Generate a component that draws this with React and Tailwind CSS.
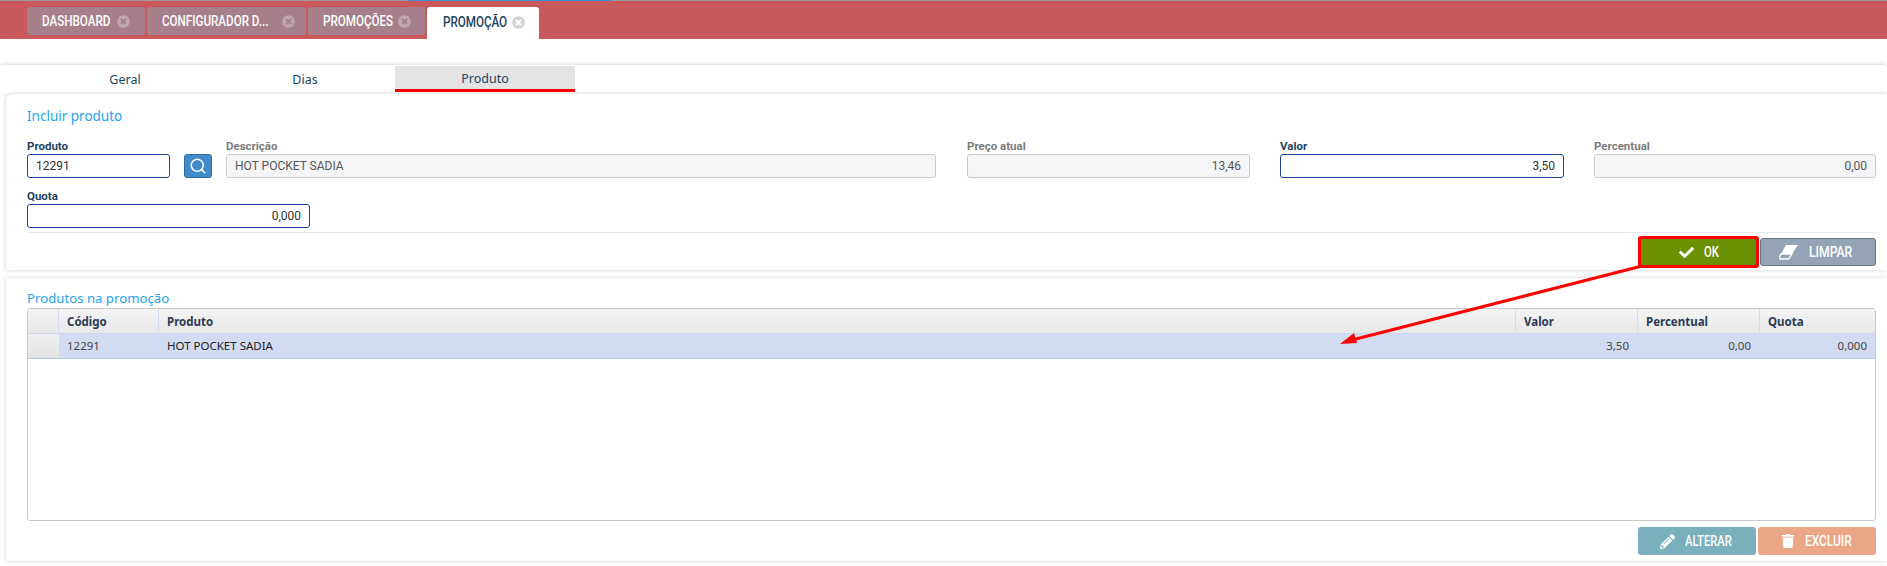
import { FaCheck, FaPencilAlt, FaTrash, FaTimesCircle } from "react-icons/fa";
import { Search } from "lucide-react";

const tabs = [
  { name: "DASHBOARD", width: "w-[118px]", text: "w-[75px]" },
  { name: "CONFIGURADOR D...", width: "w-[159px]", text: "w-[120px]" },
  { name: "PROMOÇÕES", width: "w-[117px]", text: "w-[75px]" },
];

function Field({ label, value, active, right, className }) {
  return (
    <div className={className}>
      <div className={`text-[11.5px] font-bold leading-[16px] ${active ? "text-[#1d4460]" : "text-[#7b7b7b]"}`}>
        {label}
      </div>
      <div
        className={`flex h-[24px] items-center rounded-[3px] border px-[8px] text-[12px] ${right ? "justify-end" : ""} ${
          active ? "border-[#1c43a0] bg-white text-[#333]" : "border-[#c9c9c9] bg-[#f5f5f7] text-[#555]"
        }`}
      >
        {value}
      </div>
    </div>
  );
}

function ActionButton({ icon, label, textClass, className }) {
  return (
    <button className={`flex items-center justify-center gap-[10px] rounded-[3px] text-white ${className}`}>
      {icon}
      <span className={`origin-left whitespace-nowrap text-left text-[14px] font-medium ${textClass}`}>
        {label}
      </span>
    </button>
  );
}

function EraserIcon() {
  return (
    <svg width="20" height="16" viewBox="0 0 20 16" fill="none">
      <polygon points="7,1 19,1 13,10 2,10" fill="#fff" />
      <polygon points="2,10 13,10 9.5,15 1,15 0.5,13" fill="none" stroke="#fff" strokeWidth="1.3" />
    </svg>
  );
}

export default function App() {
  return (
    <div className="relative h-[566px] w-[1887px] overflow-hidden bg-white font-['Roboto',sans-serif] text-[#333]">
      {/* barra de abas */}
      <div className="relative flex h-[39px] items-start gap-[2px] border-t border-[#999] bg-[#c9595b] pl-[27px] pt-[6px] text-[14px] font-medium">
        <div className="absolute left-[408px] top-[-1px] h-[1px] w-[204px] bg-[#3f8fce]" />
        {tabs.map((tab) => (
          <div key={tab.name} className={`flex h-[28px] items-center rounded-[3px] bg-[#a67f8b] pl-[15px] text-white ${tab.width}`}>
            <span className={`origin-left scale-x-[.83] whitespace-nowrap ${tab.text}`}>{tab.name}</span>
            <FaTimesCircle className="h-[13px] w-[13px] text-[#bfa6ae]" />
          </div>
        ))}
        <div className="flex h-[32px] w-[112px] items-center rounded-t-[3px] bg-white pb-[2px] pl-[16px] text-[#1d4460]">
          <span className="w-[69px] origin-left scale-x-[.83] whitespace-nowrap">PROMOÇÃO</span>
          <FaTimesCircle className="h-[13px] w-[13px] text-[#d5d5d5]" />
        </div>
      </div>

      {/* abas internas */}
      <div className="mt-[26px] flex h-[29px] rounded-t-[4px] bg-white pl-[35px] pt-[1px] font-['Noto_Sans',sans-serif] text-[12.5px] text-[#1d4460] shadow-[0_-1px_4px_rgba(0,0,0,0.15)]">
        <div className="flex h-[26px] w-[180px] items-center justify-center pt-[2px]">Geral</div>
        <div className="flex h-[26px] w-[180px] items-center justify-center pt-[2px]">Dias</div>
        <div className="flex h-[26px] w-[180px] items-center justify-center border-b-[3px] border-[#f00] bg-[#e4e4e4] pt-[3px]">Produto</div>
      </div>

      {/* incluir produto */}
      <div className="ml-[6px] h-[176px] rounded-tl-[6px] bg-white pl-[21px] pr-[11px] pt-[13px] shadow-[0_0_4px_rgba(0,0,0,0.2)]">
        <div className="font-['Noto_Sans',sans-serif] text-[13.5px] leading-[18px] text-[#1ba5ee]">Incluir produto</div>
        <div className="mt-[13px] flex items-end">
          <Field label="Produto" value="12291" active className="w-[143px]" />
          <button className="ml-[14px] flex h-[24px] w-[28px] items-center justify-center rounded-[3px] border border-[#2e6da4] bg-[#428bca] text-white">
            <Search size={18} strokeWidth={2} />
          </button>
          <Field label="Descrição" value="HOT POCKET SADIA" className="ml-[14px] w-[710px]" />
          <Field label="Preço atual" value="13,46" right className="ml-[31px] w-[283px]" />
          <Field label="Valor" value="3,50" active right className="ml-[30px] w-[284px]" />
          <Field label="Percentual" value="0,00" right className="ml-[30px] w-[282px]" />
        </div>
        <Field label="Quota" value="0,000" active right className="mt-[10px] w-[283px]" />
        <div className="mt-[4px] border-t border-[#e6e8ee]" />
        <div className="mt-[3px] flex justify-end gap-[1px]">
          <ActionButton
            icon={<FaCheck size={15} />}
            label="OK"
            textClass="w-[18px] scale-x-[.8]"
            className="h-[32px] w-[121px] border-[3px] border-[#f00] bg-[#6b9000] pl-[4px]"
          />
          <ActionButton
            icon={<EraserIcon />}
            label="LIMPAR"
            textClass="w-[48px] scale-x-[.87]"
            className="my-[2px] h-[28px] w-[116px] border border-[#6b7480] bg-[#95a3b6]"
          />
        </div>
      </div>

      {/* produtos na promocao */}
      <div className="ml-[6px] mt-[8px] h-[283px] bg-white pl-[21px] pr-[11px] pt-[11px] shadow-[0_0_4px_rgba(0,0,0,0.2)]">
        <div className="font-['Noto_Sans',sans-serif] text-[13.2px] leading-[19px] text-[#1ba5ee]">Produtos na promoção</div>
        <div className="h-[213px] rounded-[3px] border border-[#c8c8c8] font-['Noto_Sans',sans-serif] text-[11.5px]">
          <div className="flex h-[25px] items-stretch border-b border-[#c9d5ee] bg-gradient-to-b from-[#f4f4f4] to-[#e8e8e8] font-bold text-[#2b3a55]">
            <div className="w-[31px] border-r border-[#d3ddf2]" />
            <div className="flex w-[100px] items-center border-r border-[#d3ddf2] pl-[8px] pt-[1px]">Código</div>
            <div className="flex w-[1357px] items-center border-r border-[#d3ddf2] pl-[8px] pt-[1px]">Produto</div>
            <div className="flex w-[122px] items-center border-r border-[#d3ddf2] pl-[8px] pt-[1px]">Valor</div>
            <div className="flex w-[122px] items-center border-r border-[#d3ddf2] pl-[8px] pt-[1px]">Percentual</div>
            <div className="flex flex-1 items-center pl-[8px] pt-[1px]">Quota</div>
          </div>
          <div className="flex h-[25px] items-stretch border-b border-[#b5c7e8] text-[#444]">
            <div className="w-[31px] bg-gradient-to-b from-[#f0f0f0] to-[#e4e4e4]" />
            <div className="flex flex-1 bg-[#d3dbf3]">
              <div className="flex w-[100px] items-center pl-[8px]">12291</div>
              <div className="flex w-[1357px] items-center pl-[8px] text-[#222]">HOT POCKET SADIA</div>
              <div className="flex w-[122px] items-center justify-end pr-[9px]">3,50</div>
              <div className="flex w-[122px] items-center justify-end pr-[9px]">0,00</div>
              <div className="flex flex-1 items-center justify-end pr-[8px]">0,000</div>
            </div>
          </div>
        </div>
        <div className="mt-[6px] flex justify-end gap-[2px]">
          <ActionButton
            icon={<FaPencilAlt size={15} />}
            label="ALTERAR"
            textClass="w-[49px] scale-x-[.8]"
            className="h-[28px] w-[118px] bg-[#7aafbe]"
          />
          <ActionButton
            icon={<FaTrash size={14} />}
            label="EXCLUIR"
            textClass="w-[49px] scale-x-[.85]"
            className="h-[28px] w-[118px] bg-[#eba587]"
          />
        </div>
      </div>

      {/* seta de anotacao */}
      <svg className="pointer-events-none absolute left-0 top-0" width="1887" height="566">
        <line x1="1642" y1="266" x2="1352" y2="340" stroke="#f00" strokeWidth="3" />
        <polygon points="1340,344 1354,333 1357,343" fill="#f00" />
      </svg>
    </div>
  );
}
